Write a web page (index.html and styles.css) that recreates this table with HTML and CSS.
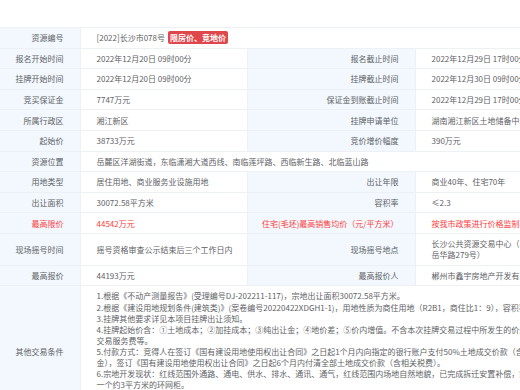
FILE: index.html
```html
<!DOCTYPE html>
<html lang="zh-CN">
<head>
    <meta charset="UTF-8">
    <meta name="viewport" content="width=device-width, initial-scale=1.0">
    <title>资源详情</title>
    <link rel="stylesheet" href="styles.css">
</head>
<body>
    <div class="page">
        <table class="detail-table">
            <colgroup>
                <col class="col-label">
                <col class="col-value">
                <col class="col-label2">
                <col class="col-value2">
            </colgroup>
            <tr>
                <td class="label">资源编号</td>
                <td class="value" colspan="3">[2022]长沙市078号<span class="tag">限房价、竞地价</span></td>
            </tr>
            <tr>
                <td class="label">报名开始时间</td>
                <td class="value">2022年12月20日 09时00分</td>
                <td class="label">报名截止时间</td>
                <td class="value">2022年12月29日 17时00分</td>
            </tr>
            <tr>
                <td class="label">挂牌开始时间</td>
                <td class="value">2022年12月20日 09时00分</td>
                <td class="label">挂牌截止时间</td>
                <td class="value">2022年12月30日 09时00分</td>
            </tr>
            <tr>
                <td class="label">竞买保证金</td>
                <td class="value">7747万元</td>
                <td class="label">保证金到账截止时间</td>
                <td class="value">2022年12月29日 17时00分</td>
            </tr>
            <tr>
                <td class="label">所属行政区</td>
                <td class="value">湘江新区</td>
                <td class="label">挂牌申请单位</td>
                <td class="value">湖南湘江新区土地储备中心</td>
            </tr>
            <tr>
                <td class="label">起始价</td>
                <td class="value">38733万元</td>
                <td class="label">竞价增价幅度</td>
                <td class="value">390万元</td>
            </tr>
            <tr>
                <td class="label">资源位置</td>
                <td class="value" colspan="3">岳麓区洋湖街道，东临潇湘大道西线、南临莲坪路、西临新生路、北临蓝山路</td>
            </tr>
            <tr>
                <td class="label">用地类型</td>
                <td class="value">居住用地、商业服务业设施用地</td>
                <td class="label">出让年限</td>
                <td class="value">商业40年、住宅70年</td>
            </tr>
            <tr>
                <td class="label">出让面积</td>
                <td class="value">30072.58平方米</td>
                <td class="label">容积率</td>
                <td class="value">≤2.3</td>
            </tr>
            <tr class="red">
                <td class="label">最高限价</td>
                <td class="value">44542万元</td>
                <td class="label">住宅(毛坯)最高销售均价（元/平方米）</td>
                <td class="value">按我市政策进行价格监制</td>
            </tr>
            <tr>
                <td class="label">现场摇号时间</td>
                <td class="value">摇号资格审查公示结束后三个工作日内</td>
                <td class="label">现场摇号地点</td>
                <td class="value">长沙公共资源交易中心（长沙市岳麓区岳华路279号）</td>
            </tr>
            <tr>
                <td class="label">最高报价</td>
                <td class="value">44193万元</td>
                <td class="label">最高报价人</td>
                <td class="value">郴州市鑫宇房地产开发有限公司</td>
            </tr>
            <tr>
                <td class="label">其他交易条件</td>
                <td class="value terms" colspan="3">
                    1.根据《不动产测量报告》(受理编号DJ-202211-117)，宗地出让面积30072.58平方米。<br>
                    2.根据《建设用地规划条件(建筑类)》(案卷编号20220422XDGH1-1)，用地性质为商住用地（R2B1，商住比1：9），容积率≤2.3。<br>
                    3.挂牌其他要求详见本项目挂牌出让须知。<br>
                    4.挂牌起始价含：①土地成本；②加挂成本；③纯出让金；④地价差；⑤价内增值。不含本次挂牌交易过程中所发生的价外费用，如交易服务费等。<br>
                    5.付款方式：竞得人在签订《国有建设用地使用权出让合同》之日起1个月内向指定的银行账户支付50%土地成交价款（含竞买保证金），签订《国有建设用地使用权出让合同》之日起6个月内付清全部土地成交价款（含相关税费）。<br>
                    6.宗地开发现状：红线范围外通路、通电、供水、排水、通讯、通气，红线范围内场地自然地貌，已完成拆迁安置补偿，宗地内现有一个约3平方米的环网柜。<br>
                    7.竞得人须在成交后按规定签订《成交确认书》。<br>
                    8.其他未尽事宜详见本项目挂牌出让须知。
                </td>
            </tr>
        </table>
    </div>
</body>
</html>
```

FILE: styles.css
```css
* {
    box-sizing: border-box;
    margin: 0;
    padding: 0;
}

html, body {
    overflow: hidden;
}

body {
    font-family: "Noto Sans CJK SC", sans-serif;
    font-size: 8px;
    color: #606266;
    background: #fff;
}

.page {
    padding-top: 27px;
}

.detail-table {
    border-collapse: collapse;
    table-layout: fixed;
    width: 579px;
}

.col-label {
    width: 80px;
}

.col-value {
    width: 167px;
}

.col-label2 {
    width: 168px;
}

.col-value2 {
    width: 164px;
}

.detail-table td {
    border: 1px solid #edf0f4;
    padding: 4.25px 8px 4.25px 16px;
    line-height: 11.1px;
    vertical-align: middle;
}

.detail-table td:first-child {
    border-left: none;
}

.detail-table .label {
    background: #f2f8fd;
    text-align: right;
    padding: 4.25px 16px 4.25px 8px;
}

.detail-table .terms {
    padding-right: 17px;
}

.tag {
    display: inline-block;
    vertical-align: top;
    margin: -1px 0 -1px 3px;
    padding: 1px 2px;
    line-height: 11px;
    background: #e0474c;
    color: #fff;
    font-weight: bold;
    border-radius: 2px;
}

.red td {
    color: #ff3b3b;
}
```
